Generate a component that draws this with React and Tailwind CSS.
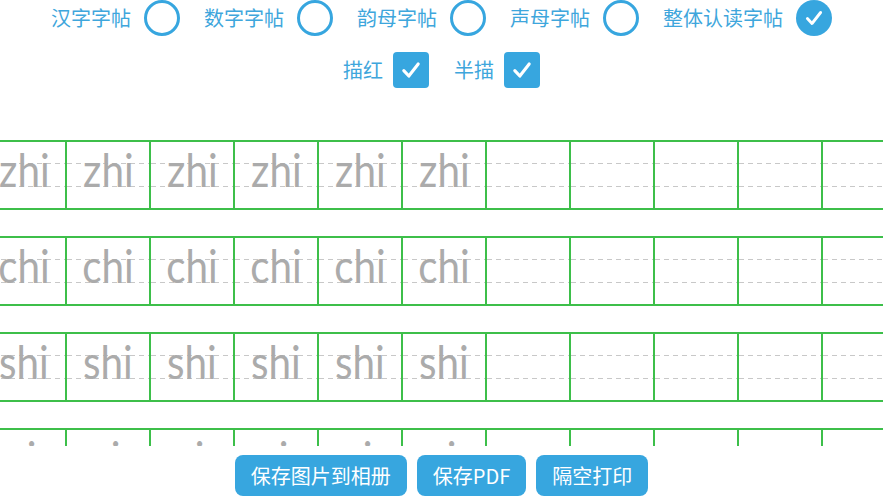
import React from "react";

const Check = ({ size = 20 }) => (
  <svg width={size} height={size} viewBox="0 0 20 20" fill="none">
    <path d="M4 10.5 L8.2 15 L16 5" stroke="white" strokeWidth="2.6" strokeLinecap="round" strokeLinejoin="round" />
  </svg>
);

const Radio = ({ checked }) =>
  checked ? (
    <div className="w-[36px] h-[36px] rounded-full bg-[#37a6df] flex items-center justify-center">
      <Check size={22} />
    </div>
  ) : (
    <div className="w-[36px] h-[36px] rounded-full border-[3px] border-[#37a6df]" />
  );

const Box = () => (
  <div className="w-[36px] h-[36px] rounded-[4px] bg-[#37a6df] flex items-center justify-center">
    <Check size={24} />
  </div>
);

const types = [
  { label: "汉字字帖", checked: false },
  { label: "数字字帖", checked: false },
  { label: "韵母字帖", checked: false },
  { label: "声母字帖", checked: false },
  { label: "整体认读字帖", checked: true },
];

const rows = ["zhi", "chi", "shi", "ri"];

const Cell = ({ text }) => (
  <div className="relative w-[84px] shrink-0 h-full border-l-2 border-[#3dbf4a] flex flex-col overflow-hidden">
    <div className="h-[21px] shrink-0" />
    <div className="h-px shrink-0 bg-[repeating-linear-gradient(to_right,#c8c8c8_0_5px,transparent_5px_9px)]" />
    <div className="h-[22px] shrink-0" />
    <div className="h-px shrink-0 bg-[repeating-linear-gradient(to_right,#c8c8c8_0_5px,transparent_5px_9px)]" />
    {text && (
      <div className="absolute inset-x-0 top-[4px] text-center leading-none">
        <span className="inline-block scale-x-[0.86] text-[47px] leading-none text-[#ababab] font-['Lato',sans-serif]">
          {text}
        </span>
      </div>
    )}
  </div>
);

export default function App() {
  return (
    <div className="w-[883px] h-[497px] overflow-hidden bg-white flex flex-col font-['Noto_Sans_CJK_SC','Noto_Sans',sans-serif]">
      {/* type selector */}
      <div className="h-[36px] flex items-center justify-center gap-6">
        {types.map((t) => (
          <div key={t.label} className="flex items-center gap-[13px]">
            <span className="text-[20px] text-[#3ea6dc]">{t.label}</span>
            <Radio checked={t.checked} />
          </div>
        ))}
      </div>

      {/* options */}
      <div className="mt-4 h-[36px] flex items-center justify-center gap-[25px]">
        <div className="flex items-center gap-[10px]">
          <span className="text-[20px] text-[#3ea6dc]">描红</span>
          <Box />
        </div>
        <div className="flex items-center gap-[10px]">
          <span className="text-[20px] text-[#3ea6dc]">半描</span>
          <Box />
        </div>
      </div>

      {/* practice grid, last row cut off by the panel edge */}
      <div className="mt-[52px] h-[306px] shrink-0 overflow-hidden">
        <div className="ml-[-19px] flex flex-col gap-[26px]">
          {rows.map((r, ri) => (
            <div
              key={r}
              className={
                ri < 3
                  ? "h-[70px] shrink-0 flex border-y-2 border-[#3dbf4a] w-max"
                  : "h-[18px] shrink-0 flex border-t-2 border-[#3dbf4a] w-max overflow-hidden"
              }
            >
              {Array.from({ length: 11 }).map((_, i) => (
                <Cell key={i} text={i < 6 ? r : null} />
              ))}
            </div>
          ))}
        </div>
      </div>

      {/* actions */}
      <div className="mt-[9px] flex justify-center gap-[10px]">
        {["保存图片到相册", "保存PDF", "隔空打印"].map((b) => (
          <button
            key={b}
            className="h-[41px] px-4 rounded-lg bg-[#37a6df] text-white text-[20px] leading-none"
          >
            {b}
          </button>
        ))}
      </div>
    </div>
  );
}
